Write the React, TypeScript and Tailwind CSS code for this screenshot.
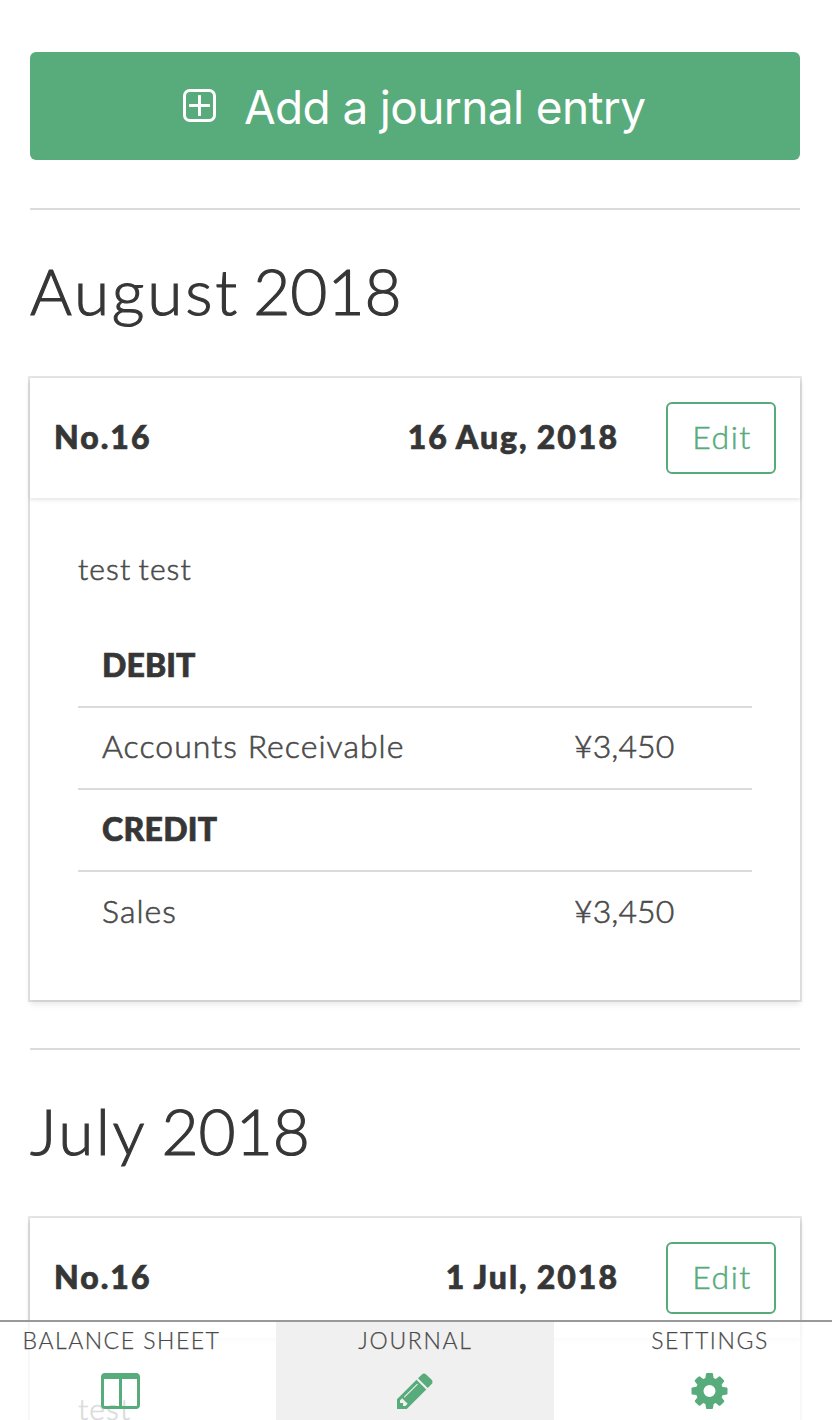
import type { ReactNode } from "react";

const ICONS = {
  plusSquare:
    "M1344 800v64q0 14-9 23t-23 9h-352v352q0 14-9 23t-23 9h-64q-14 0-23-9t-9-23v-352h-352q-14 0-23-9t-9-23v-64q0-14 9-23t23-9h352v-352q0-14 9-23t23-9h64q14 0 23 9t9 23v352h352q14 0 23 9t9 23zm128 448v-832q0-66-47-113t-113-47h-832q-66 0-113 47t-47 113v832q0 66 47 113t113 47h832q66 0 113-47t47-113zm128-832v832q0 119-84.500 203.500t-203.500 84.500h-832q-119 0-203.500-84.500t-84.500-203.500v-832q0-119 84.500-203.500t203.500-84.500h832q119 0 203.500 84.500t84.500 203.500z",
  pencil:
    "M491 1536l91-91-235-235-91 91v107h128v128h107zm523-928q0-22-22-22-10 0-17 7l-542 542q-7 7-7 17 0 22 22 22 10 0 17-7l542-542q7-7 7-17zm-54-192l416 416-832 832h-416v-416zm683 96q0 53-37 90l-166 166-416-416 166-165q36-38 90-38 53 0 91 38l235 234q37 39 37 91z",
  cog: "M1152 896q0-106-75-181t-181-75-181 75-75 181 75 181 181 75 181-75 75-181zm512-109v222q0 12-8 23t-20 13l-185 28q-19 54-39 91 35 50 107 138 10 12 10 25t-9 23q-27 37-99 108t-94 71q-12 0-26-9l-138-108q-44 23-91 38-16 136-29 186-7 28-36 28h-222q-14 0-24.500-8.500t-11.500-21.500l-28-184q-49-16-90-37l-141 107q-10 9-25 9-14 0-25-11-126-114-165-168-7-10-7-23 0-12 8-23 15-21 51-66.500t54-70.500q-27-50-41-99l-183-27q-13-2-21-12.500t-8-23.500v-222q0-12 8-23t19-13l186-28q14-46 39-92-40-57-107-138-10-12-10-24 0-10 9-23 26-36 98.500-107.500t94.500-71.500q13 0 26 10l138 107q44-23 91-38 16-136 29-186 7-28 36-28h222q14 0 24.500 8.500t11.500 21.500l28 184q49 16 90 37l142-107q9-9 24-9 13 0 25 10 129 119 165 170 7 8 7 22 0 12-8 23-15 21-51 66.500t-54 70.500q26 50 41 98l183 28q13 2 21 12.500t8 23.500z",
  columns:
    "M224 1536h608v-1152h-640v1120q0 13 9.500 22.500t22.500 9.500zm1376-32v-1120h-640v1152h608q13 0 22.500-9.500t9.500-22.500zm128-1216v1216q0 66-47 113t-113 47h-1344q-66 0-113-47t-47-113v-1216q0-66 47-113t113-47h1344q66 0 113 47t47 113z",
};

function Icon({ name, className }: { name: keyof typeof ICONS; className?: string }) {
  // Half a pixel to the right keeps the vertical bars of these icons crisp.
  const viewBox = name === "pencil" ? "0 0 1792 1792" : "-21.33 0 1792 1792";
  return (
    <svg viewBox={viewBox} fill="currentColor" className={`block h-[42px] w-[42px] shrink-0 ${className ?? ""}`}>
      <path d={ICONS[name]} />
    </svg>
  );
}

function MonthTitle({ month, year, className }: { month: string; year: string; className: string }) {
  return (
    <h1 className="mt-[44px] mb-[48px] h-[74px] whitespace-nowrap text-[64px] leading-[74px] font-light text-[#363636] [-webkit-text-stroke:1.1px_#363636]">
      <span className={className}>{month} </span>
      <span className="tracking-[0px]">{year}</span>
    </h1>
  );
}

function Row({ label, amount, last }: { label: string; amount: string; last?: boolean }) {
  return (
    <div
      className={`flex h-[82px] items-center pl-6 text-[32px] font-light text-[#4a4a4a] [-webkit-text-stroke:0.6px_#4a4a4a] ${last ? "pb-[5px]" : "border-b-2 border-[#dbdbdb] pb-[4px]"}`}
    >
      <span className="w-[472px] tracking-[1.05px]">{label}</span>
      <span className="tracking-[0.1px]">{amount}</span>
    </div>
  );
}

function Side({ children, className }: { children: ReactNode; className: string }) {
  return (
    <div
      className={`flex h-[82px] items-center border-b-2 border-[#dbdbdb] pb-[2px] pl-6 text-[32px] font-black text-[#363636] [-webkit-text-stroke:0.7px_#363636] ${className}`}
    >
      {children}
    </div>
  );
}

function Entry({ date, memo, children }: { date: string; memo: string; children?: ReactNode }) {
  return (
    <section className="h-[622px] bg-white shadow-[0_4px_6px_rgba(10,10,10,0.1),0_0_0_2px_rgba(10,10,10,0.1)]">
      <header className="flex h-[120px] items-center px-6 text-[32px] font-black text-[#363636] shadow-[0_2px_4px_rgba(10,10,10,0.1)]">
        <span className="pb-[2px] tracking-[2px] [-webkit-text-stroke:0.7px_#363636]">No.16</span>
        <span className="mr-[47px] ml-auto pb-[2px] tracking-[2px] [-webkit-text-stroke:0.7px_#363636] [word-spacing:-1.5px]">
          {date}
        </span>
        <button className="h-[72px] w-[110px] rounded-[6px] border-2 border-[#56ab7b] bg-white pb-[3px] pl-[2px] text-[32px] font-light tracking-[1.5px] text-[#56ab7b] [-webkit-text-stroke:0.5px_#56ab7b]">
          Edit
        </button>
      </header>
      <div className="px-12 pt-[46px]">
        <p className="mb-[34px] h-12 text-[30px] leading-[48px] font-light tracking-[1.1px] text-[#4a4a4a] [-webkit-text-stroke:0.6px_#4a4a4a] [word-spacing:-2px]">
          {memo}
        </p>
        {children}
      </div>
    </section>
  );
}

export default function App() {
  return (
    <div className="relative h-[1420px] w-[832px] overflow-hidden bg-white font-['Lato',sans-serif]">
      <main className="pt-[52px] pr-8 pl-[30px]">
        <button className="flex h-[108px] w-full items-center rounded-[6px] bg-[#58ab7b] pl-[148px] font-['Inter',sans-serif] text-[46px] text-white">
          <Icon name="plusSquare" className="mt-px mr-[24px]" />
          <span className="pt-[2px] whitespace-nowrap tracking-[-0.65px]">Add a journal entry</span>
        </button>

        <hr className="mt-12 h-[2px] border-0 bg-[#dbdbdb]" />
        <MonthTitle month="August" year="2018" className="tracking-[2.8px] [word-spacing:-7px]" />
        <div className="pt-[2px]">
          <Entry date="16 Aug, 2018" memo="test test">
            <Side className="tracking-[0.1px]">DEBIT</Side>
            <Row label="Accounts Receivable" amount="¥3,450" />
            <Side className="tracking-[0.3px]">CREDIT</Side>
            <Row label="Sales" amount="¥3,450" last />
          </Entry>
        </div>

        <hr className="mt-12 h-[2px] border-0 bg-[#dbdbdb]" />
        <MonthTitle month="July" year="2018" className="tracking-[2.5px] [word-spacing:-4px]" />
        <div className="pt-[2px]">
          <Entry date="1 Jul, 2018" memo="test" />
        </div>
      </main>

      <nav className="absolute inset-x-0 bottom-0 flex h-[100px] border-t-2 border-[#999999] bg-white/80 text-[23px] leading-[36px] font-light text-[#4a4a4a] [-webkit-text-stroke:0.25px_#4a4a4a]">
        <a className="flex w-[276px] flex-col items-center pr-[36px]">
          <span className="ml-[3px] whitespace-nowrap tracking-[1.5px]">BALANCE SHEET</span>
          <Icon name="columns" className="mt-3 text-[#58ab7b] [-webkit-text-stroke:0]" />
        </a>
        <a className="flex w-[278px] flex-col items-center bg-[#f0f0f0]">
          <span className="ml-px tracking-[1.7px]">JOURNAL</span>
          <Icon name="pencil" className="mt-3 text-[#58ab7b]" />
        </a>
        <a className="flex w-[278px] flex-col items-center pl-[32px]">
          <span className="ml-[2px] tracking-[1.6px]">SETTINGS</span>
          <Icon name="cog" className="mt-3 text-[#58ab7b]" />
        </a>
      </nav>
    </div>
  );
}
